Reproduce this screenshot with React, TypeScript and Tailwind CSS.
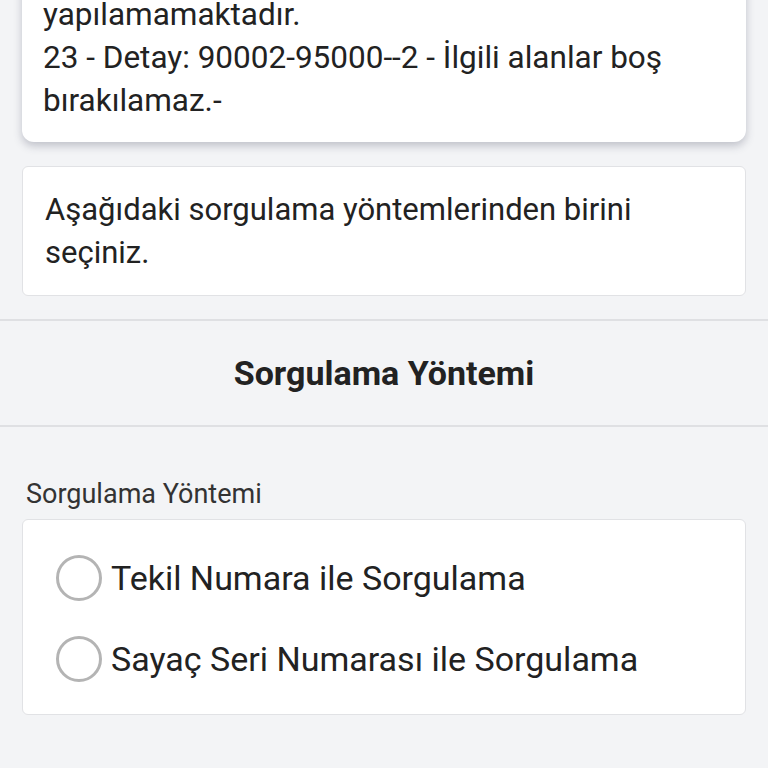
import React from "react";

function Radio({ label }: { label: string }) {
  return (
    <div className="flex h-[81px] items-center">
      <div className="ml-[33px] h-[46px] w-[46px] shrink-0 rounded-full border-[3.5px] border-[#b4b4b4] bg-white" />
      <span className="ml-[9px] text-[34px] leading-none text-[#222222]">{label}</span>
    </div>
  );
}

export default function App() {
  return (
    <div
      className="min-h-[768px] w-full overflow-hidden bg-[#f3f4f6]"
      style={{ fontFamily: "Roboto, 'Noto Sans', sans-serif" }}
    >
      <div className="mx-[22px] mt-[-40px] rounded-[12px] bg-white px-[21px] pb-[20px] pt-[33px] text-[31.5px] leading-[43px] text-[#222222] shadow-[0_4px_8px_rgba(60,64,90,0.28)]">
        <div>yapılamamaktadır.</div>
        <div>23 - Detay: 90002-95000--2 - İlgili alanlar boş bırakılamaz.-</div>
      </div>

      <div className="mx-[22px] mt-[24px] rounded-[6px] border border-[#e1e2e5] bg-white px-[22px] pb-[21px] pt-[21px] text-[31px] leading-[43px] text-[#222222]">
        Aşağıdaki sorgulama yöntemlerinden birini seçiniz.
      </div>

      <div className="mt-[23px] flex h-[108px] items-center justify-center border-b-2 border-t-2 border-[#dfe0e3]">
        <h2 className="text-[34px] font-bold text-[#222222]">Sorgulama Yöntemi</h2>
      </div>

      <div className="mt-[52px] px-[26px] text-[27px] leading-[30px] text-[#333333]">Sorgulama Yöntemi</div>

      <div className="mx-[22px] mt-[10px] rounded-[6px] border border-[#e1e2e5] bg-white pb-[15px] pt-[17px]">
        <Radio label="Tekil Numara ile Sorgulama" />
        <Radio label="Sayaç Seri Numarası ile Sorgulama" />
      </div>
    </div>
  );
}
